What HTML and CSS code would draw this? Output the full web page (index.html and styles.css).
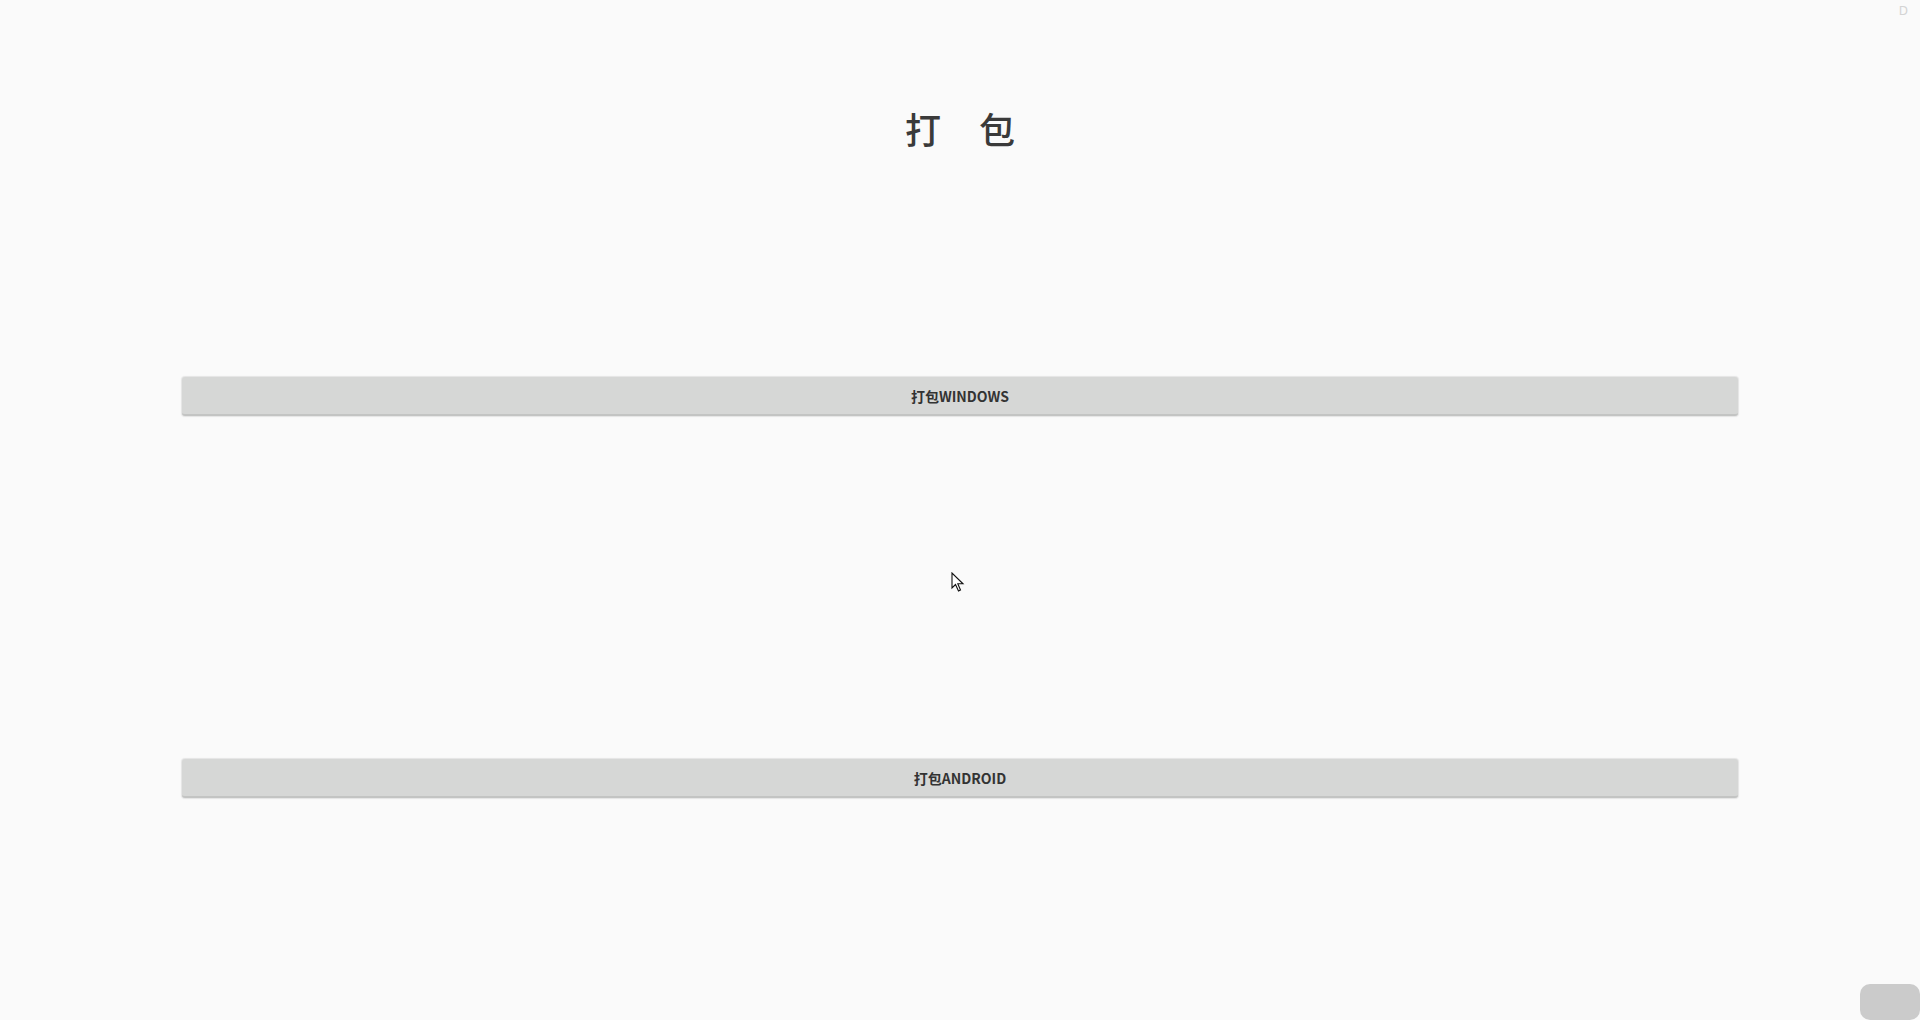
FILE: index.html
```html
<!DOCTYPE html>
<html lang="zh">
<head>
<meta charset="utf-8">
<title>打包</title>
<link rel="stylesheet" href="styles.css">
</head>
<body>
<div class="corner-mark">D</div>
<main class="page">
  <h1 class="title">打包</h1>
  <button class="pack-btn first">打包WINDOWS</button>
  <button class="pack-btn second">打包ANDROID</button>
</main>
<svg class="cursor" width="14" height="21" viewBox="0 0 14 21">
  <path d="M1 1 L1 16 L4.5 12.5 L7.5 19 L9.5 18 L6.8 11.8 L12 11.8 Z" fill="#fff" stroke="#111" stroke-width="1.1" stroke-linejoin="miter"/>
</svg>
<div class="float-widget"></div>
</body>
</html>
```
FILE: styles.css
```css
html, body {
  margin: 0;
  padding: 0;
  height: 100%;
}
body {
  background: #fafafa;
  font-family: "Noto Sans CJK SC", "Noto Sans", sans-serif;
  color: #333;
  overflow: hidden;
  position: relative;
}
.page {
  display: flex;
  flex-direction: column;
  align-items: stretch;
  padding: 110px 182px 0 182px;
}
.title {
  margin: 0;
  font-size: 36px;
  line-height: 36px;
  font-weight: 500;
  text-align: center;
  letter-spacing: 38px;
  padding-left: 38px;
  color: #3a3a3a;
}
.pack-btn {
  height: 39px;
  border: none;
  border-bottom: 2px solid #c3c4c3;
  border-radius: 3px;
  background: #d6d7d6;
  box-shadow: 0 0 1px 1px #e4e4e4;
  font-family: "Noto Sans CJK SC", "Noto Sans", sans-serif;
  font-size: 14px;
  font-weight: 700;
  color: #333;
  padding: 0;
  cursor: default;
}
.pack-btn.first {
  margin-top: 231px;
}
.pack-btn.second {
  margin-top: 343px;
}
.corner-mark {
  position: absolute;
  top: 4px;
  right: 12px;
  font-family: "DejaVu Sans", sans-serif;
  font-size: 12px;
  color: #d4d4d4;
}
.cursor {
  position: absolute;
  left: 951px;
  top: 572px;
}
.float-widget {
  position: absolute;
  right: 0;
  bottom: 0;
  width: 60px;
  height: 36px;
  background: #cbcbcb;
  border-radius: 10px;
}
```
